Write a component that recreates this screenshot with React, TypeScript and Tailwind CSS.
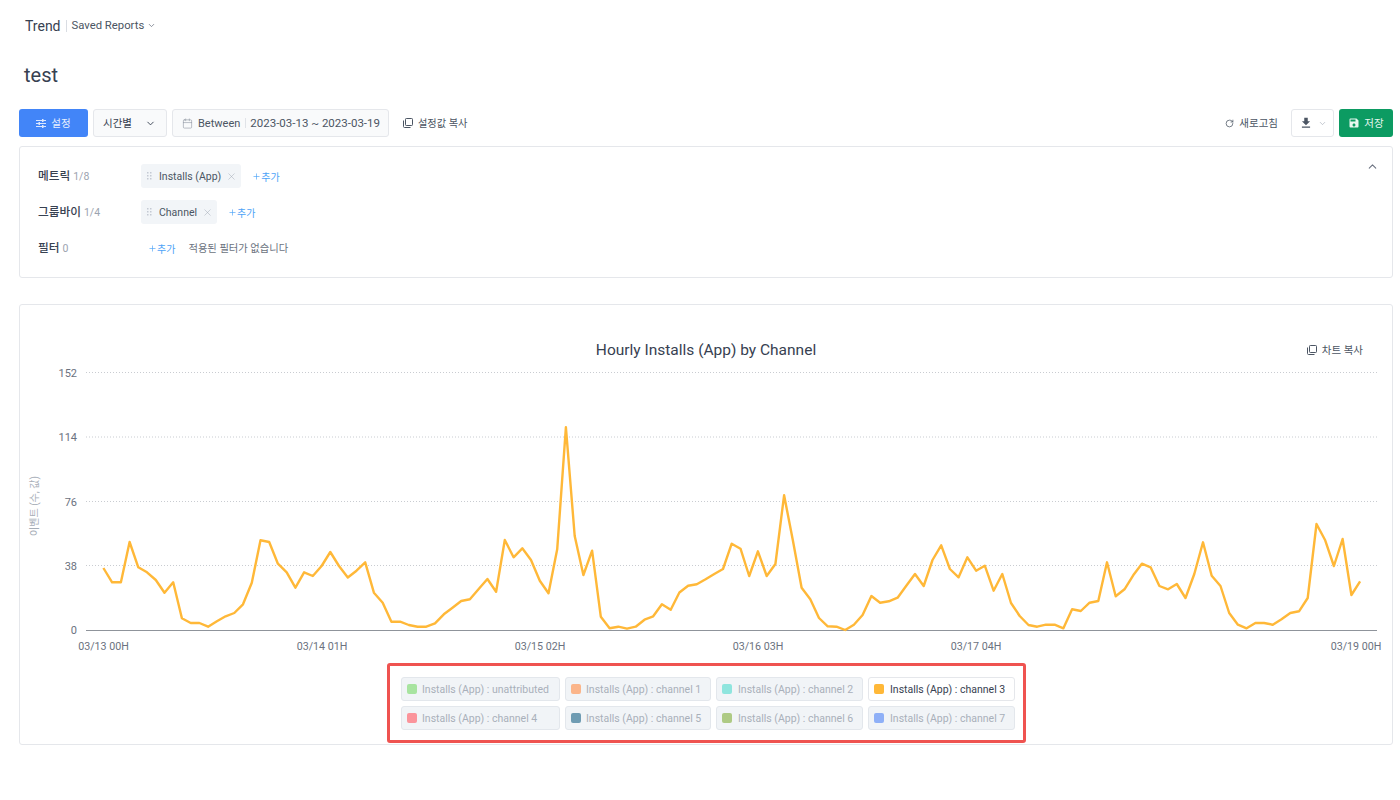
import React from "react";
import { ChevronDown, ChevronUp, Calendar, RotateCw, X, Plus } from "lucide-react";
import { MdFileDownload, MdSave } from "react-icons/md";

const font = "font-['Roboto','Noto_Sans_CJK_KR',sans-serif]";

const ys = [
  568, 582.3, 582.3, 542, 567.3, 572.3, 580, 592.7, 582.3, 618.3, 623, 623, 626.7, 621.3, 616.3, 613, 604.3, 582.7, 540.3, 542,
  563.7, 572.3, 587.7, 572.3, 576, 566, 552, 566, 577.5, 570.7, 562.3, 592.7, 602.7, 621.7, 621.7, 625, 626.7, 626.7, 623.3, 614.3,
  607.7, 601, 599.3, 589, 579, 591.7, 540, 557.3, 548.3, 560, 580.7, 593.3, 549.3, 427.3, 536, 575, 550.7, 616.7, 628.3, 626.7,
  628.7, 626.7, 619.7, 616.3, 604.3, 609.8, 592.5, 585.7, 584.3, 579.3, 574, 569, 543.7, 548.7, 576, 551.3, 576, 564, 495.3, 540,
  587.7, 599.3, 618, 626.3, 626.7, 630, 624.7, 615, 596, 602.7, 601.3, 597.7, 585.7, 574, 586, 560, 545.3, 569, 577.3, 557.3,
  570.7, 565.7, 590.7, 574, 603, 616, 625, 626.7, 624.7, 624.7, 628.3, 609.3, 611, 602.7, 601, 562.3, 596.3, 589.3, 575.3, 563.7,
  567.3, 586, 589.3, 584, 598, 574, 542.3, 575.7, 586, 613, 624.7, 628.3, 623, 623, 624.7, 619.3, 613, 611.3, 598, 524,
  540.3, 566, 539, 595, 581.3,
];
const points = ys.map((y, i) => `${(103.4 + i * 8.727).toFixed(1)},${y}`).join(" ");

const grid = [
  { y: 372.5, label: "152" },
  { y: 437, label: "114" },
  { y: 501.5, label: "76" },
  { y: 565.5, label: "38" },
];
const xLabels = [
  { x: 103.5, label: "03/13 00H" },
  { x: 322, label: "03/14 01H" },
  { x: 540, label: "03/15 02H" },
  { x: 758, label: "03/16 03H" },
  { x: 976, label: "03/17 04H" },
  { x: 1356, label: "03/19 00H" },
];

const legend = [
  { label: "Installs (App) : unattributed", color: "bg-[#a8e4a0]", w: "w-[159px]", gap: "mr-[5px]" },
  { label: "Installs (App) : channel 1", color: "bg-[#fbb58a]", w: "w-[146px]", gap: "mr-[5px]" },
  { label: "Installs (App) : channel 2", color: "bg-[#8fe5de]", w: "w-[147px]", gap: "mr-[6px]" },
  { label: "Installs (App) : channel 3", color: "bg-[#ffb838]", w: "w-[147px]", gap: "mr-[6px]", active: true },
  { label: "Installs (App) : channel 4", color: "bg-[#fb949b]", w: "w-[159px]", gap: "mr-[5px]" },
  { label: "Installs (App) : channel 5", color: "bg-[#6f9cb3]", w: "w-[146px]", gap: "mr-[5px]" },
  { label: "Installs (App) : channel 6", color: "bg-[#aeca84]", w: "w-[147px]", gap: "mr-[6px]" },
  { label: "Installs (App) : channel 7", color: "bg-[#8fb0f7]", w: "w-[147px]", gap: "mr-[6px]" },
];

function CopyIcon() {
  return (
    <svg width="10" height="10" viewBox="0 0 10 10" fill="none" stroke="#4b5563" strokeWidth="1">
      <rect x="2.5" y="0.5" width="7" height="7" rx="0.8" />
      <path d="M0.5 2.5V8.5a1 1 0 0 0 1 1H7.5" />
    </svg>
  );
}

function Grip() {
  return (
    <svg width="5" height="8" viewBox="0 0 5 8" fill="#c4cad3">
      {[0, 3, 6].map((y) => (
        <React.Fragment key={y}>
          <rect x="0" y={y} width="1.5" height="1.5" />
          <rect x="3" y={y} width="1.5" height="1.5" />
        </React.Fragment>
      ))}
    </svg>
  );
}

function SlidersIcon() {
  return (
    <svg width="10" height="9" viewBox="0 0 10 9" fill="none" stroke="#dbe7fe" strokeWidth="1">
      <path d="M0 1.5H10M0 4.5H10M0 7.5H10" />
      <rect x="6" y="0" width="1.5" height="3" fill="#dbe7fe" stroke="none" />
      <rect x="2.5" y="3" width="1.5" height="3" fill="#dbe7fe" stroke="none" />
      <rect x="6" y="6" width="1.5" height="3" fill="#dbe7fe" stroke="none" />
    </svg>
  );
}

function Chip({ label }: { label: string }) {
  return (
    <div className="flex h-6 items-center rounded-[3px] bg-[#f2f5f8] pl-[6px] pr-[4px] text-[10.5px] text-[#4b5563]">
      <Grip />
      <span className="ml-[7px] pt-[2px]">{label}</span>
      <X size={11} strokeWidth={1} className="ml-[5px] text-[#9aa3af]" />
    </div>
  );
}

function AddLink() {
  return (
    <span className="flex items-center text-[10px] text-[#4da3f7]">
      <Plus size={9} strokeWidth={1.75} />
      <span className="pt-[2px]">추가</span>
    </span>
  );
}

function Row({ title, count, children }: { title: string; count: string; children: React.ReactNode }) {
  return (
    <div className="flex h-6 items-center">
      <div className="w-[103px] shrink-0 pt-[2px] text-[11.7px]">
        <span className="font-medium text-[#374151]">{title}</span>{" "}
        <span className="text-[10.5px] text-[#9ca3af]">{count}</span>
      </div>
      {children}
    </div>
  );
}

export default function App() {
  return (
    <div className={`${font} min-h-[800px] w-[1400px] bg-white pl-[19px] pr-[7px] text-[#4b5563]`}>
      <div className="flex h-[50px] items-center pl-[6px] pt-[1px]">
        <span className="pt-[2px] text-[14px] text-[#374151]">Trend</span>
        <span className="mx-[5px] h-[12px] w-px bg-[#d9dde3]" />
        <span className="pt-[2px] text-[11.3px] text-[#4b5563]">Saved Reports</span>
        <ChevronDown size={9} strokeWidth={2} className="ml-[3px] text-[#6b7280]" />
      </div>

      <div className="flex h-[50px] items-center pl-[5px] text-[20px] text-[#374151]">test</div>

      <div className="mt-[9px] flex h-7 items-center">
        <button className="flex h-7 w-[69px] items-center justify-center gap-[5px] rounded-[3px] bg-[#4285f8] text-[10.5px] text-[#e8f0fe]">
          <SlidersIcon />
          <span className="pt-[2px]">설정</span>
        </button>
        <div className="ml-[5px] flex h-7 w-[74px] items-center justify-between rounded-[3px] border border-[#e5e7eb] bg-[#f9fafb] pl-[9px] pr-[10px] text-[10.5px] text-[#374151]">
          <span className="pt-[2px]">시간별</span>
          <ChevronDown size={11} strokeWidth={2} />
        </div>
        <div className="ml-[5px] flex h-7 w-[217px] items-center rounded-[3px] border border-[#e5e7eb] bg-[#f9fafb] pl-[9px] text-[11px] text-[#4b5563]">
          <Calendar size={11} strokeWidth={1.25} className="text-[#8a919c]" />
          <span className="ml-[5px] pt-[2px]">Between</span>
          <span className="ml-[5px] mr-[4px] h-[10px] w-px bg-[#e0e3e8]" />
          <span className="pt-[2px] text-[11.5px]">2023-03-13 ~ 2023-03-19</span>
        </div>
        <div className="ml-[14px] flex items-center gap-[5px] text-[10.2px] text-[#4b5563]">
          <CopyIcon />
          <span className="pt-[2px]">설정값 복사</span>
        </div>
        <div className="ml-auto flex items-center gap-[5px] text-[10.5px] text-[#4b5563]">
          <RotateCw size={9} strokeWidth={2} />
          <span className="pt-[2px]">새로고침</span>
        </div>
        <div className="ml-[13px] flex h-7 w-[43px] items-center justify-center gap-[5px] rounded-[3px] border border-[#e5e7eb] bg-white text-[#4b5563]">
          <MdFileDownload size={14} />
          <ChevronDown size={9} strokeWidth={1.5} className="text-[#9ca3af]" />
        </div>
        <button className="ml-[5px] flex h-7 w-[54px] items-center justify-center gap-[4px] rounded-[3px] bg-[#0c9b62] text-[10.5px] text-[#e7f7f0]">
          <MdSave size={12} />
          <span className="pt-[2px]">저장</span>
        </button>
      </div>

      <div className="relative mt-[9px] flex h-[132px] flex-col gap-3 rounded-[3px] border border-[#e5e7eb] pl-[18px] pt-[17px]">
        <ChevronUp size={13} strokeWidth={2} className="absolute right-[13px] top-[13px] text-[#6b7280]" />
        <Row title="메트릭" count="1/8">
          <Chip label="Installs (App)" />
          <span className="ml-[11px]"><AddLink /></span>
        </Row>
        <Row title="그룹바이" count="1/4">
          <Chip label="Channel" />
          <span className="ml-[11px]"><AddLink /></span>
        </Row>
        <Row title="필터" count="0">
          <span className="ml-[7px]"><AddLink /></span>
          <span className="ml-[13px] pt-[2px] text-[10.3px] text-[#6b7280]">적용된 필터가 없습니다</span>
        </Row>
      </div>

      <div className="mt-[26px] h-[441px] rounded-[3px] border border-[#e5e7eb]">
        <div className="grid h-[58px] grid-cols-[1fr_auto_1fr] items-center pt-[32px]">
          <span />
          <span className="pt-[2px] text-[15.5px] text-[#374151]">Hourly Installs (App) by Channel</span>
          <div className="flex items-center justify-end gap-[5px] pr-[29px] text-[10.5px] text-[#4b5563]">
            <CopyIcon />
            <span className="pt-[2px]">차트 복사</span>
          </div>
        </div>
        <svg width="1372" height="298" viewBox="20 363 1372 298" className="block">
          {grid.map((g) => (
            <g key={g.label}>
              <line x1="86" x2="1377" y1={g.y} y2={g.y} stroke="#c9ccd1" strokeWidth="1" strokeDasharray="1 2" />
              <text x="77" y={g.y + 4} textAnchor="end" fontSize="11" fill="#6b7280">{g.label}</text>
            </g>
          ))}
          <line x1="86" x2="1377" y1="630.5" y2="630.5" stroke="#8f949b" strokeWidth="1" />
          <text x="77" y="634" textAnchor="end" fontSize="11" fill="#6b7280">0</text>
          <text transform="translate(37.5 506) rotate(-90)" textAnchor="middle" fontSize="10" fill="#a6adb7">이벤트 (수, 값)</text>
          {xLabels.map((l) => (
            <text key={l.label} x={l.x} y="650" textAnchor="middle" fontSize="10.7" fill="#6b7280">{l.label}</text>
          ))}
          <polyline points={points} fill="none" stroke="#ffb838" strokeWidth="2.4" strokeLinejoin="round" />
        </svg>
        <div className="flex justify-center pt-[2px]">
          <div className="ml-[1px] flex h-[80px] w-[639px] flex-wrap content-center gap-x-[5px] gap-y-[5px] rounded-[3px] border-[3px] border-[#ef5350] pl-[11px] pt-[1px]">
            {legend.map((l) => (
              <div
                key={l.label}
                className={`flex h-6 items-center rounded-[3px] border pl-[5px] text-[10.5px] ${l.w} ${l.active ? "border-[#e5e7eb] bg-white text-[#374151]" : "border-[#e3e7ec] bg-[#f1f4f7] text-[#a9b0ba]"}`}
              >
                <span className={`h-[10px] w-[10px] rounded-[2px] ${l.gap} ${l.color}`} />
                <span className="pt-[2px]">{l.label}</span>
              </div>
            ))}
          </div>
        </div>
      </div>
    </div>
  );
}
